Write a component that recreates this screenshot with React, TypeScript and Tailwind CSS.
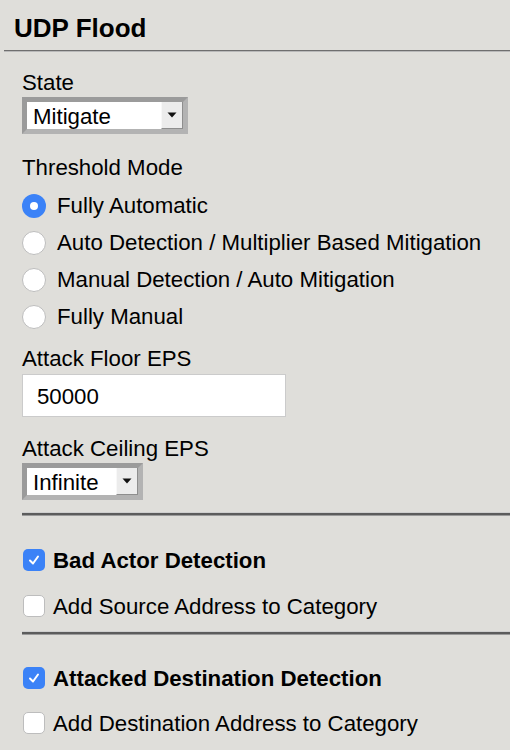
import React from "react";

function Select({ value, width }: { value: string; width: string }) {
  return (
    <div
      className={`flex h-[37px] ${width} border-[5px] border-t-[#9b9b9b] border-l-[#9b9b9b] border-r-[#b3b3b3] border-b-[#b3b3b3] bg-white`}
    >
      <div className="flex flex-1 items-center pl-[6px] pt-[3px] text-[22.25px] leading-none">{value}</div>
      <div className="flex w-[22px] items-center justify-center bg-[#ececec] border-l border-l-[#f8f8f8] border-r border-r-[#8e8e8e] border-b border-b-[#8e8e8e]">
        <svg width="10" height="6" viewBox="0 0 10 6">
          <polygon points="0.5,0.5 9.5,0.5 5,5.5" fill="#111" />
        </svg>
      </div>
    </div>
  );
}

function Radio({ checked, label }: { checked?: boolean; label: string }) {
  return (
    <div className="flex h-[37px] items-center">
      {checked ? (
        <div className="flex h-[24px] w-[24px] items-center justify-center rounded-full bg-[#3b82f7]">
          <div className="h-[8px] w-[8px] rounded-full bg-white" />
        </div>
      ) : (
        <div className="h-[24px] w-[24px] rounded-full border border-[#bdbdbd] bg-white" />
      )}
      <span className="ml-[11px] pt-[2px] text-[22.25px] leading-none">{label}</span>
    </div>
  );
}

function Check({ checked, label, bold }: { checked?: boolean; label: string; bold?: boolean }) {
  return (
    <div className="flex h-[46px] items-center">
      {checked ? (
        <div className="flex h-[22px] w-[22px] items-center justify-center rounded-[5px] bg-[#3b82f7]">
          <svg width="14" height="14" viewBox="0 0 14 14">
            <path d="M3 7.5 L6 10.5 L11 3.5" fill="none" stroke="white" strokeWidth="2" strokeLinecap="round" strokeLinejoin="round" />
          </svg>
        </div>
      ) : (
        <div className="h-[22px] w-[22px] rounded-[5px] border border-[#bdbdbd] bg-white" />
      )}
      <span className={`ml-[8px] pt-[2px] text-[22.25px] leading-none ${bold ? "font-bold" : ""}`}>{label}</span>
    </div>
  );
}

function Divider() {
  return (
    <div className="flex flex-col">
      <div className="h-px bg-[#cfcfcf]" />
      <div className="h-[2px] bg-[#5c5c5c]" />
      <div className="h-px bg-[#9a9a9a]" />
    </div>
  );
}

export default function App() {
  return (
    <div className="h-[750px] w-[510px] overflow-hidden bg-[#dfdeda] font-['Liberation_Sans',Arial,sans-serif] text-black">
      <div className="pl-[14px] pt-[13px] text-[26px] font-bold leading-[30px]">UDP Flood</div>
      <div className="ml-[4px] mt-[7px] flex flex-col">
        <div className="h-px bg-[#6f6f6f]" />
        <div className="h-px bg-[#b9b9b9]" />
      </div>
      <div className="pl-[22px]">
        <div className="mt-[15px] pt-[3px] text-[22.25px] leading-[26px]">State</div>
        <div className="mt-[1px]">
          <Select value="Mitigate" width="w-[166px]" />
        </div>
        <div className="mt-[18px] pt-[3px] text-[22.25px] leading-[26px]">Threshold Mode</div>
        <div className="mt-[6px] flex flex-col">
          <Radio checked label="Fully Automatic" />
          <Radio label="Auto Detection / Multiplier Based Mitigation" />
          <Radio label="Manual Detection / Auto Mitigation" />
          <Radio label="Fully Manual" />
        </div>
        <div className="mt-[8px] pt-[3px] text-[22.25px] leading-[26px]">Attack Floor EPS</div>
        <div className="mt-[2px] flex h-[43px] w-[264px] items-center border border-[#cbcbcb] bg-white pl-[14px] pt-[3px] text-[22.25px] leading-none">
          50000
        </div>
        <div className="mt-[17px] pt-[2px] text-[22.25px] leading-[26px]">Attack Ceiling EPS</div>
        <div className="mt-[1px]">
          <Select value="Infinite" width="w-[121px]" />
        </div>
        <div className="mt-[12px]">
          <Divider />
        </div>
        <div className="mt-[21px] pl-[1px]">
          <Check checked bold label="Bad Actor Detection" />
          <Check label="Add Source Address to Category" />
        </div>
        <div className="mt-[2px]">
          <Divider />
        </div>
        <div className="mt-[20px] pl-[1px]">
          <Check checked bold label="Attacked Destination Detection" />
          <div className="-mt-[1px]">
            <Check label="Add Destination Address to Category" />
          </div>
        </div>
      </div>
    </div>
  );
}
